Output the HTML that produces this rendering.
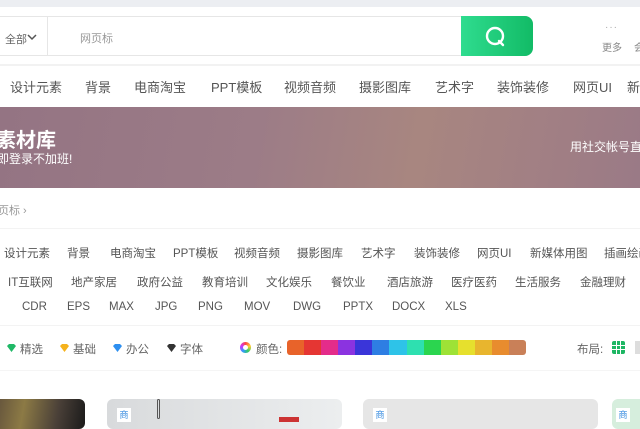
<!DOCTYPE html><html><head><meta charset="utf-8"><style>
*{margin:0;padding:0;box-sizing:border-box}
body{width:640px;height:420px;overflow:hidden;background:#fff;position:relative;font-family:"Liberation Sans","Noto Sans CJK SC",sans-serif;color:#444}
.a{position:absolute;white-space:nowrap}
.n{font-size:13px;color:#555;top:77px}
.c{font-size:11.5px;color:#555}
.f{font-size:11.5px;color:#666;top:341px}
.g{position:absolute;width:4px;height:4px;background:#1db663}
</style></head><body>
<div class="a" style="left:0;top:0;width:640px;height:7px;background:#eceef2"></div>
<div class="a" style="left:-2px;top:16px;width:535px;height:40px;border:1px solid #e6e6e6;border-radius:0 8px 8px 0"></div>
<div class="a" style="left:5px;top:31px;font-size:11px;color:#666">全部</div>
<svg class="a" style="left:27px;top:34px" width="10" height="7"><path d="M1 1l4 4 4-4" stroke="#555" stroke-width="1.5" fill="none"/></svg>
<div class="a" style="left:47px;top:17px;width:1px;height:38px;background:#e6e6e6"></div>
<div class="a" style="left:80px;top:30px;font-size:11px;color:#999">网页标</div>
<div class="a" style="left:461px;top:16px;width:72px;height:40px;border-radius:0 8px 8px 0;background:linear-gradient(90deg,#2fdc8f,#12bb66)"></div>
<svg class="a" style="left:484px;top:25px" width="24" height="24"><circle cx="11" cy="11" r="8" stroke="#fff" stroke-width="2.4" fill="none"/><path d="M15 16l4 4" stroke="#fff" stroke-width="2.4" stroke-linecap="round"/></svg>
<div class="a" style="left:605px;top:22px;font-size:10px;color:#aaa;letter-spacing:1px">···</div>
<div class="a" style="left:602px;top:39px;font-size:10px;color:#888">更多</div>
<div class="a" style="left:634px;top:39px;font-size:10px;color:#888">会</div>
<div class="a" style="left:0;top:64px;width:640px;height:2px;background:#f2f2f2"></div>
<div class="a n" style="left:10px">设计元素</div><div class="a n" style="left:85px">背景</div><div class="a n" style="left:134px">电商淘宝</div><div class="a n" style="left:211px">PPT模板</div><div class="a n" style="left:284px">视频音频</div><div class="a n" style="left:359px">摄影图库</div><div class="a n" style="left:435px">艺术字</div><div class="a n" style="left:497px">装饰装修</div><div class="a n" style="left:573px">网页UI</div><div class="a n" style="left:627px">新</div>
<div class="a" style="left:0;top:107px;width:640px;height:81px;background:linear-gradient(100deg,#947483 0%,#9c7c87 40%,#a88680 65%,#a17f84 85%,#9a7a86 100%)"></div>
<div class="a" style="left:-4px;top:124px;font-size:20px;font-weight:bold;color:#fff">素材库</div>
<div class="a" style="left:-3px;top:150px;font-size:12px;color:#fff">即登录不加班!</div>
<div class="a" style="left:570px;top:138px;font-size:12px;color:#fff">用社交帐号直</div>
<div class="a" style="left:-2px;top:202px;font-size:11px;color:#999">页标 ›</div>
<div class="a" style="left:0;top:228px;width:640px;height:1px;background:#f3f3f3"></div>
<div class="a c" style="top:245px;left:4px">设计元素</div><div class="a c" style="top:245px;left:67px">背景</div><div class="a c" style="top:245px;left:110px">电商淘宝</div><div class="a c" style="top:245px;left:173px">PPT模板</div><div class="a c" style="top:245px;left:234px">视频音频</div><div class="a c" style="top:245px;left:297px">摄影图库</div><div class="a c" style="top:245px;left:361px">艺术字</div><div class="a c" style="top:245px;left:414px">装饰装修</div><div class="a c" style="top:245px;left:477px">网页UI</div><div class="a c" style="top:245px;left:530px">新媒体用图</div><div class="a c" style="top:245px;left:604px">插画绘画</div>
<div class="a c" style="top:274px;left:8px">IT互联网</div><div class="a c" style="top:274px;left:71px">地产家居</div><div class="a c" style="top:274px;left:137px">政府公益</div><div class="a c" style="top:274px;left:202px">教育培训</div><div class="a c" style="top:274px;left:266px">文化娱乐</div><div class="a c" style="top:274px;left:331px">餐饮业</div><div class="a c" style="top:274px;left:387px">酒店旅游</div><div class="a c" style="top:274px;left:451px">医疗医药</div><div class="a c" style="top:274px;left:515px">生活服务</div><div class="a c" style="top:274px;left:580px">金融理财</div>
<div class="a c" style="top:301px;left:22px">CDR</div><div class="a c" style="top:301px;left:67px">EPS</div><div class="a c" style="top:301px;left:109px">MAX</div><div class="a c" style="top:301px;left:155px">JPG</div><div class="a c" style="top:301px;left:198px">PNG</div><div class="a c" style="top:301px;left:244px">MOV</div><div class="a c" style="top:301px;left:293px">DWG</div><div class="a c" style="top:301px;left:343px">PPTX</div><div class="a c" style="top:301px;left:392px">DOCX</div><div class="a c" style="top:301px;left:445px">XLS</div>
<div class="a" style="left:0;top:325px;width:640px;height:1px;background:#f3f3f3"></div>
<svg class="a" style="left:6px;top:343px" width="11" height="10"><path d="M1 3l2-2h5l2 2-4.5 6z" fill="#1fb866"/></svg><div class="a f" style="left:20px">精选</div>
<svg class="a" style="left:59px;top:343px" width="11" height="10"><path d="M1 3l2-2h5l2 2-4.5 6z" fill="#f5b21c"/></svg><div class="a f" style="left:73px">基础</div>
<svg class="a" style="left:112px;top:343px" width="11" height="10"><path d="M1 3l2-2h5l2 2-4.5 6z" fill="#2d8ff0"/></svg><div class="a f" style="left:126px">办公</div>
<svg class="a" style="left:166px;top:343px" width="11" height="10"><path d="M1 3l2-2h5l2 2-4.5 6z" fill="#333"/></svg><div class="a f" style="left:180px">字体</div>
<div class="a" style="left:240px;top:342px;width:11px;height:11px;border-radius:50%;background:conic-gradient(#f44,#fc3,#3c6,#39f,#c3f,#f44)"><div style="margin:3px;width:5px;height:5px;border-radius:50%;background:#fff"></div></div>
<div class="a f" style="left:256px">颜色:</div>
<div class="a" style="left:287px;top:340px;width:239px;height:15px;border-radius:3px;overflow:hidden;display:flex">
<i style="flex:1;background:#e8632a"></i><i style="flex:1;background:#e53633"></i><i style="flex:1;background:#e42c8a"></i><i style="flex:1;background:#8b33e0"></i><i style="flex:1;background:#3a35d9"></i><i style="flex:1;background:#2e7ee3"></i><i style="flex:1;background:#2ec3e8"></i><i style="flex:1;background:#2ee0b0"></i><i style="flex:1;background:#2bd54f"></i><i style="flex:1;background:#9ee236"></i><i style="flex:1;background:#e6e02d"></i><i style="flex:1;background:#e8b52e"></i><i style="flex:1;background:#e88c2e"></i><i style="flex:1;background:#c98058"></i></div>
<div class="a f" style="left:577px">布局:</div>
<div class="a" style="left:612px;top:341px;width:13px;height:13px;background:#1db663;border-radius:2px"></div>
<div class="a" style="left:616px;top:341px;width:1px;height:13px;background:#fff"></div>
<div class="a" style="left:620px;top:341px;width:1px;height:13px;background:#fff"></div>
<div class="a" style="left:612px;top:345px;width:13px;height:1px;background:#fff"></div>
<div class="a" style="left:612px;top:349px;width:13px;height:1px;background:#fff"></div>
<div class="a" style="left:635px;top:341px;width:8px;height:13px;background:#ddd"></div>
<div class="a" style="left:0;top:370px;width:640px;height:1px;background:#f5f5f5"></div>
<div class="a" style="left:-10px;top:399px;width:95px;height:30px;border-radius:6px;background:linear-gradient(100deg,#5a4a3a,#8c7a45 35%,#4a4038 70%,#1a1a1a)"></div>
<div class="a" style="left:107px;top:399px;width:235px;height:30px;border-radius:6px;background:linear-gradient(90deg,#d8dadc,#eceeef)"></div>
<div class="a" style="left:117px;top:408px;width:14px;height:14px;background:#fff;font-size:9px;color:#3a8de0;text-align:center">商</div>
<div class="a" style="left:157px;top:399px;width:3px;height:20px;border:1px solid #555;border-radius:2px"></div>
<div class="a" style="left:279px;top:417px;width:20px;height:5px;background:#c33"></div>
<div class="a" style="left:363px;top:399px;width:235px;height:30px;border-radius:6px;background:#e6e6e6"></div>
<div class="a" style="left:373px;top:408px;width:14px;height:14px;background:#fff;font-size:9px;color:#3a8de0;text-align:center">商</div>
<div class="a" style="left:612px;top:399px;width:40px;height:30px;border-radius:6px;background:#d6eedd"></div>
<div class="a" style="left:616px;top:408px;width:14px;height:14px;background:#fff;font-size:9px;color:#3a8de0;text-align:center">商</div>
</body></html>
